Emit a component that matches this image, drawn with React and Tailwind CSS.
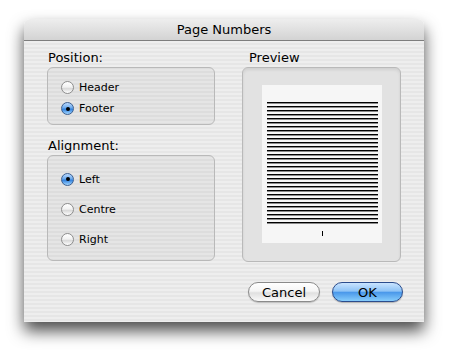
import React from 'react'

function Radio({ label, checked }) {
  return (
    <div className="flex items-center gap-[5px]">
      {checked ? (
        <span className="w-[13px] h-[13px] rounded-full border border-[#3d5f8f] bg-[linear-gradient(to_bottom,#b9d9ff_0%,#6aa9ec_45%,#2f7fdc_55%,#9fd4ff_100%)] flex items-center justify-center">
          <span className="w-[4px] h-[4px] rounded-full bg-black" />
        </span>
      ) : (
        <span className="w-[13px] h-[13px] rounded-full border border-[#8d8d8d] bg-[linear-gradient(to_bottom,#ffffff_0%,#f2f2f2_45%,#d9d9d9_60%,#ffffff_100%)]" />
      )}
      <span className="text-[11px] leading-none text-black">{label}</span>
    </div>
  )
}

function App() {
  const lines = Array.from({ length: 31 })

  return (
    <div className="w-[454px] h-[351px] bg-white pl-[24px] pt-[19px] font-['DejaVu_Sans',sans-serif]">
      <div className="w-[400px] h-[303px] flex flex-col rounded-t-[6px] shadow-[0_9px_16px_rgba(0,0,0,0.7)]">
        <div className="h-[22px] rounded-t-[6px] border-b border-[#7d7d7d] bg-[linear-gradient(to_bottom,#eeeeee,#d3d3d3)] flex items-center justify-center text-[13px] text-black">
          Page Numbers
        </div>

        <div className="flex-1 bg-[repeating-linear-gradient(to_bottom,#eeeeee_0px,#eeeeee_2px,#e6e6e6_2px,#e6e6e6_4px)] pt-[9px] pl-[23px] pr-[21px]">
          <div className="flex gap-[27px]">
            <div className="w-[168px] flex flex-col">
              <div className="text-[13px] leading-[16px] pl-[1px] mb-[1px] text-black">Position:</div>
              <div className="h-[58px] rounded-[6px] border border-[#b9b9b9] bg-black/[0.035] pl-[13px] pt-[9px]">
                <div className="h-[21px] flex items-center"><Radio label="Header" /></div>
                <div className="h-[21px] flex items-center"><Radio label="Footer" checked /></div>
              </div>

              <div className="text-[13px] leading-[16px] pl-[1px] mt-[13px] mb-[1px] text-black">Alignment:</div>
              <div className="h-[106px] rounded-[6px] border border-[#b9b9b9] bg-black/[0.035] pl-[13px] pt-[8px]">
                <div className="h-[30px] flex items-center"><Radio label="Left" checked /></div>
                <div className="h-[30px] flex items-center"><Radio label="Centre" /></div>
                <div className="h-[30px] flex items-center"><Radio label="Right" /></div>
              </div>
            </div>

            <div className="w-[159px] flex flex-col">
              <div className="text-[13px] leading-[16px] pl-[7px] mb-[1px] text-black">Preview</div>
              <div className="h-[195px] rounded-[6px] border border-[#b9b9b9] bg-[#e2e2e2] shadow-[inset_0_2px_3px_rgba(0,0,0,0.08)] flex justify-center pt-[17px]">
                <div className="w-[120px] h-[158px] bg-[#f6f6f6] pt-[17px] pl-[5px] pr-[4px] flex flex-col">
                  {lines.map((_, i) => (
                    <div key={i} className="h-[2px] mb-[2px] bg-[linear-gradient(to_bottom,#000000_50%,#8a8a8a_50%)]" />
                  ))}
                  <div className="flex justify-center mt-[5px]">
                    <div className="w-[1px] h-[5px] bg-black" />
                  </div>
                </div>
              </div>
            </div>
          </div>

          <div className="flex justify-end gap-[12px] mt-[20px]">
            <button className="w-[72px] h-[20px] rounded-full border border-[#8a8a8a] bg-[linear-gradient(to_bottom,#ffffff_0%,#f5f5f5_45%,#e0e0e0_55%,#fafafa_100%)] text-[13px] leading-none text-black shadow-[0_1px_1px_rgba(0,0,0,0.2)]">
              Cancel
            </button>
            <button className="w-[71px] h-[20px] rounded-full border border-[#2b4c8c] bg-[linear-gradient(to_bottom,#c9e4ff_0%,#8ec3f6_45%,#4a98ea_52%,#86ccfb_100%)] text-[13px] leading-none text-black shadow-[0_1px_1px_rgba(0,0,0,0.25)]">
              OK
            </button>
          </div>
        </div>
      </div>
    </div>
  )
}

export default App
